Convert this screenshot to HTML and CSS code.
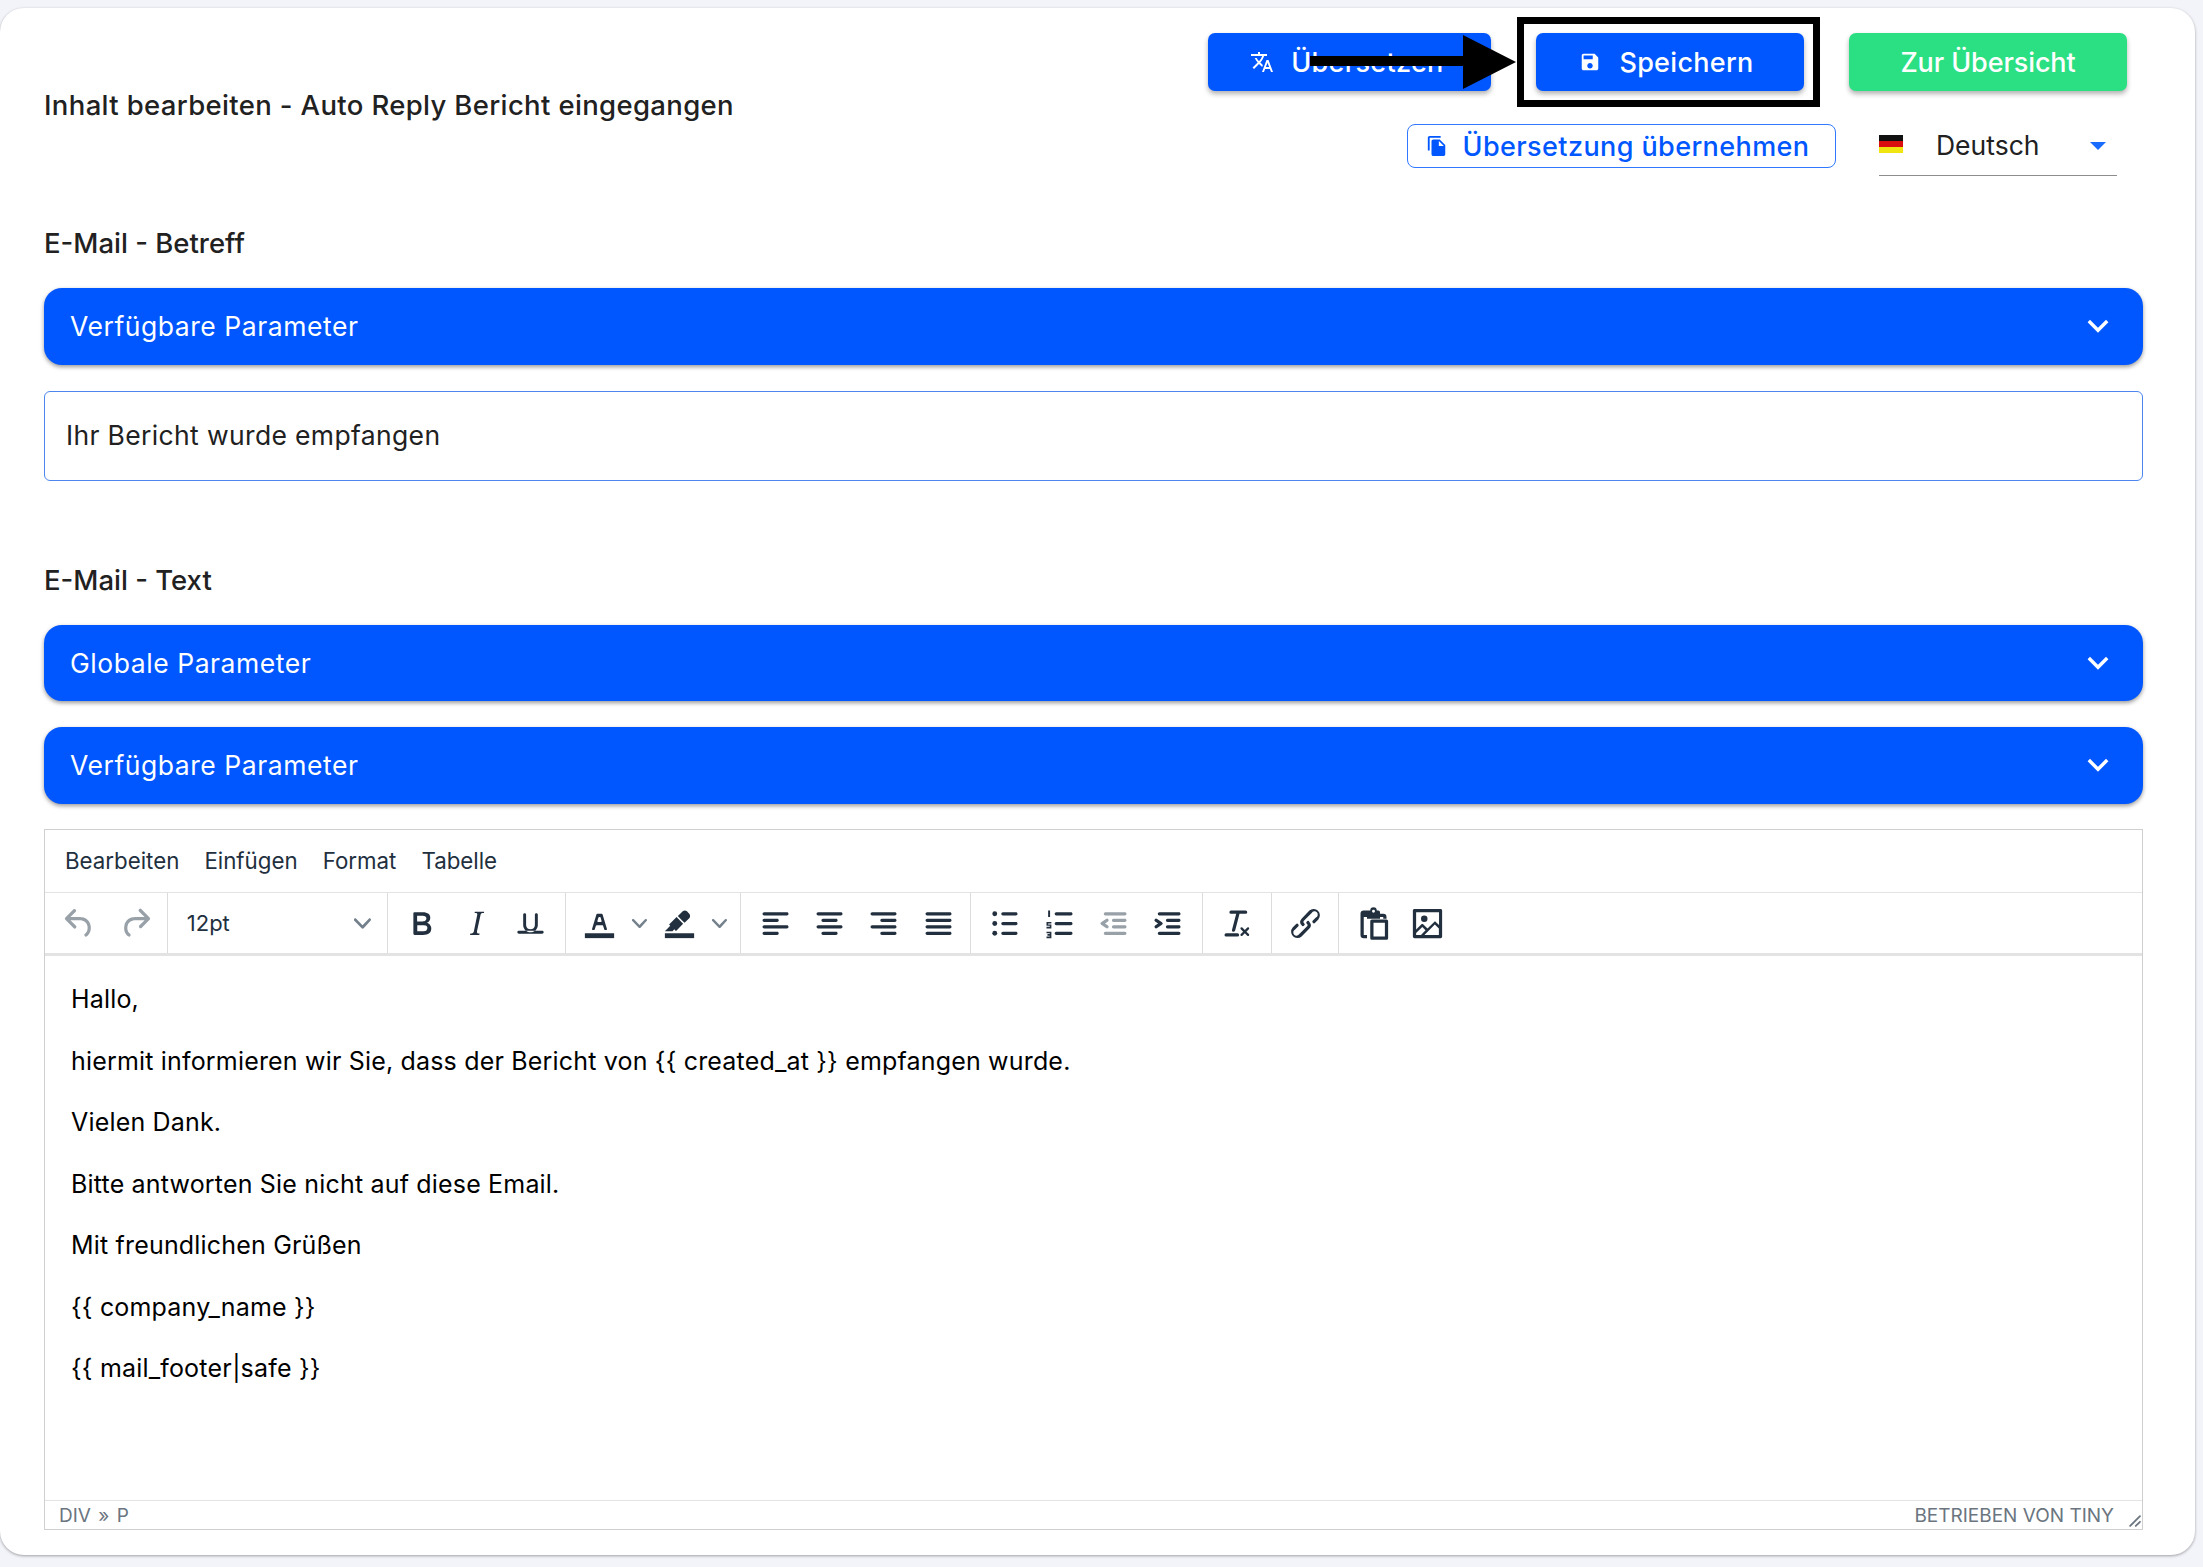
FILE: index.html
```html
<!DOCTYPE html>
<html lang="de">
<head>
    <meta charset="utf-8">
    <title>Inhalt bearbeiten</title>
    <link rel="stylesheet" href="styles.css">
</head>
<body>
    <div class="card">
        <div class="header">
            <h1 class="title">Inhalt bearbeiten - Auto Reply Bericht eingegangen</h1>
            <div class="actions">
                <div class="actions-row">
                    <button class="btn btn--blue btn--translate">
                        <svg class="btn-icon" viewBox="0 0 24 24"><path d="M12.87 15.07l-2.54-2.51.03-.03c1.74-1.94 2.98-4.17 3.71-6.53H17V4h-7V2H8v2H1v1.99h11.17C11.5 7.92 10.44 9.75 9 11.35 8.07 10.32 7.3 9.19 6.69 8h-2c.73 1.63 1.73 3.17 2.98 4.56l-5.09 5.02L4 19l5-5 3.11 3.11.76-2.04zM18.5 10h-2L12 22h2l1.12-3h4.75L21 22h2l-4.5-12zm-2.62 7l1.62-4.33L19.12 17h-3.24z"/></svg>
                        Übersetzen
                    </button>
                    <button class="btn btn--blue btn--save">
                        <svg class="btn-icon" viewBox="0 0 24 24"><path d="M17 3H5c-1.11 0-2 .9-2 2v14c0 1.1.89 2 2 2h14c1.1 0 2-.9 2-2V7l-4-4zm-5 16c-1.66 0-3-1.34-3-3s1.34-3 3-3 3 1.34 3 3-1.34 3-3 3zm3-10H5V5h10v4z"/></svg>
                        Speichern
                    </button>
                    <button class="btn btn--green">Zur Übersicht</button>
                </div>
                <div class="actions-row actions-row--second">
                    <button class="btn-outline">
                        <svg class="btn-icon" viewBox="0 0 24 24"><path d="M16 1H4c-1.1 0-2 .9-2 2v14h2V3h12V1zm-1 4l6 6v10c0 1.1-.9 2-2 2H7.99C6.89 23 6 22.1 6 21l.01-14c0-1.1.89-2 1.99-2h7zm-1 7h5.5L14 6.5V12z"/></svg>
                        Übersetzung übernehmen
                    </button>
                    <div class="lang-select">
                        <span class="flag"></span>
                        <span class="lang-name">Deutsch</span>
                        <span class="caret"></span>
                    </div>
                </div>
            </div>
        </div>

        <h2 class="section-title section-title--first">E-Mail - Betreff</h2>
        <div class="bar">
            <span>Verfügbare Parameter</span>
            <svg class="bar-chevron" viewBox="0 0 24 24"><path d="M5.5 8.5L12 15l6.5-6.5" /></svg>
        </div>
        <div class="subject-input">Ihr Bericht wurde empfangen</div>

        <h2 class="section-title">E-Mail - Text</h2>
        <div class="bar">
            <span>Globale Parameter</span>
            <svg class="bar-chevron" viewBox="0 0 24 24"><path d="M5.5 8.5L12 15l6.5-6.5" /></svg>
        </div>
        <div class="bar bar--tight">
            <span>Verfügbare Parameter</span>
            <svg class="bar-chevron" viewBox="0 0 24 24"><path d="M5.5 8.5L12 15l6.5-6.5" /></svg>
        </div>

        <div class="editor">
            <div class="menubar">
                <span class="menu-item">Bearbeiten</span>
                <span class="menu-item">Einfügen</span>
                <span class="menu-item">Format</span>
                <span class="menu-item">Tabelle</span>
            </div>
            <div class="toolbar">
                <div class="tool-group tool-group--history">
                    <span class="tool tool--off"><svg viewBox="0 0 24 24"><path d="M6.4 8H12c3.7 0 6.2 2 6.8 5.1.6 2.7-.4 5.6-2.3 6.8a1 1 0 01-1-1.8c1.1-.6 1.8-2.7 1.4-4.6-.5-2.1-2.1-3.5-4.9-3.5H6.4l3.3 3.3a1 1 0 11-1.4 1.4l-5-5a1 1 0 010-1.4l5-5a1 1 0 011.4 1.4L6.4 8z"/></svg></span>
                    <span class="tool tool--off"><svg viewBox="0 0 24 24"><path d="M17.6 10H12c-2.8 0-4.4 1.4-4.9 3.5-.4 2 .3 4 1.4 4.6a1 1 0 11-1 1.8c-2-1.2-2.9-4.1-2.3-6.8.6-3 3-5.1 6.8-5.1h5.6l-3.3-3.3a1 1 0 111.4-1.4l5 5a1 1 0 010 1.4l-5 5a1 1 0 01-1.4-1.4l3.3-3.3z"/></svg></span>
                </div>
                <div class="tool-group">
                    <div class="size-select">
                        <span>12pt</span>
                        <svg class="chevron" viewBox="0 0 10 10"><path d="M8.7 2.2c.3-.3.8-.3 1 0 .4.4.4.9 0 1.2L5.7 7.8c-.3.3-.9.3-1.2 0L.2 3.4a.8.8 0 010-1.2c.3-.3.8-.3 1.1 0L5 6l3.7-3.8z"/></svg>
                    </div>
                </div>
                <div class="tool-group">
                    <span class="tool"><svg viewBox="0 0 24 24"><path fill-rule="evenodd" d="M7.8 19c-.3 0-.5 0-.6-.2l-.2-.5V5.7c0-.2 0-.4.2-.5l.6-.2h5c1.5 0 2.7.3 3.5 1 .7.6 1.1 1.4 1.1 2.5a3 3 0 01-.6 1.9c-.4.6-1 1-1.6 1.2.4.1.9.3 1.3.6s.8.7 1 1.2c.4.4.5 1 .5 1.6 0 1.3-.4 2.3-1.3 3-.8.7-2.1 1-3.8 1H7.8zm5-8.3c.6 0 1.2-.1 1.6-.5.4-.3.6-.7.6-1.3 0-1.1-.8-1.7-2.3-1.7H9.3v3.5h3.4zm.5 6c.7 0 1.3-.1 1.7-.4.4-.4.6-.9.6-1.5s-.2-1-.7-1.4c-.4-.3-1-.4-2-.4H9.4v3.8h4z"/></svg></span>
                    <span class="tool"><svg viewBox="0 0 24 24"><path fill-rule="evenodd" d="M16.7 4.7l-.1.9h-.3c-.6 0-1 0-1.4.3-.3.3-.4.6-.5 1.1l-2.1 9.8v.6c0 .5.4.8 1.4.8h.2l-.2.8H8l.2-.8h.2c1.1 0 1.8-.5 2-1.5l2-9.8.1-.5c0-.6-.4-.8-1.4-.8h-.3l.2-.9h5.8z"/></svg></span>
                    <span class="tool"><svg viewBox="0 0 24 24"><path fill-rule="evenodd" d="M16 5c.6 0 1 .4 1 1v7c0 2.8-2.2 5-5 5s-5-2.2-5-5V6c0-.6.4-1 1-1s1 .4 1 1v7c0 1.7 1.3 3 3 3s3-1.3 3-3V6c0-.6.4-1 1-1zM4 17h16c.6 0 1 .4 1 1s-.4 1-1 1H4a1 1 0 110-2z" transform="translate(1.2 1.2) scale(.9)"/></svg></span>
                </div>
                <div class="tool-group tool-group--color">
                    <span class="tool tool--color"><svg viewBox="0 0 24 24"><path d="M3 18h18v3H3z"/><path d="M8.7 16h-.8a.5.5 0 01-.5-.6l2.7-9c.1-.3.3-.4.5-.4h2.8c.2 0 .4.1.5.4l2.7 9a.5.5 0 01-.5.6h-.8a.5.5 0 01-.4-.4l-.7-2.2c0-.3-.3-.4-.5-.4h-3.4c-.2 0-.4.1-.5.4l-.7 2.2c0 .3-.2.4-.4.4zm2.6-7.6l-.6 2a.5.5 0 00.5.6h1.6a.5.5 0 00.5-.6l-.6-2c0-.3-.3-.4-.5-.4h-.4c-.2 0-.4.1-.5.4z"/></svg></span>
                    <span class="tool-arrow"><svg class="chevron" viewBox="0 0 10 10"><path d="M8.7 2.2c.3-.3.8-.3 1 0 .4.4.4.9 0 1.2L5.7 7.8c-.3.3-.9.3-1.2 0L.2 3.4a.8.8 0 010-1.2c.3-.3.8-.3 1.1 0L5 6l3.7-3.8z"/></svg></span>
                    <span class="tool tool--color"><svg viewBox="0 0 24 24"><path d="M3 18h18v3H3z"/><path d="M7.7 16.7H3l3.3-3.3-.7-.8L10.2 8l4 4.1-4 4.2c-.2.2-.6.2-.8 0l-.6-.7-1.1 1.1zm5-7.5L11 7.4l3-2.9a2 2 0 012.6 0L18 6c.7.7.7 2 0 2.7l-2.9 2.9-1.8-1.8-.5-.6"/></svg></span>
                    <span class="tool-arrow"><svg class="chevron" viewBox="0 0 10 10"><path d="M8.7 2.2c.3-.3.8-.3 1 0 .4.4.4.9 0 1.2L5.7 7.8c-.3.3-.9.3-1.2 0L.2 3.4a.8.8 0 010-1.2c.3-.3.8-.3 1.1 0L5 6l3.7-3.8z"/></svg></span>
                </div>
                <div class="tool-group tool-group--align">
                    <span class="tool"><svg viewBox="0 0 24 24"><path d="M5 5h14c.6 0 1 .4 1 1s-.4 1-1 1H5a1 1 0 110-2zm0 4h8c.6 0 1 .4 1 1s-.4 1-1 1H5a1 1 0 110-2zm0 8h8c.6 0 1 .4 1 1s-.4 1-1 1H5a1 1 0 010-2zm0-4h14c.6 0 1 .4 1 1s-.4 1-1 1H5a1 1 0 010-2z"/></svg></span>
                    <span class="tool"><svg viewBox="0 0 24 24"><path d="M5 5h14c.6 0 1 .4 1 1s-.4 1-1 1H5a1 1 0 110-2zm3 4h8c.6 0 1 .4 1 1s-.4 1-1 1H8a1 1 0 110-2zm0 8h8c.6 0 1 .4 1 1s-.4 1-1 1H8a1 1 0 010-2zm-3-4h14c.6 0 1 .4 1 1s-.4 1-1 1H5a1 1 0 010-2z"/></svg></span>
                    <span class="tool"><svg viewBox="0 0 24 24"><path d="M5 5h14c.6 0 1 .4 1 1s-.4 1-1 1H5a1 1 0 110-2zm6 4h8c.6 0 1 .4 1 1s-.4 1-1 1h-8a1 1 0 010-2zm0 8h8c.6 0 1 .4 1 1s-.4 1-1 1h-8a1 1 0 010-2zm-6-4h14c.6 0 1 .4 1 1s-.4 1-1 1H5a1 1 0 010-2z"/></svg></span>
                    <span class="tool"><svg viewBox="0 0 24 24"><path d="M5 5h14c.6 0 1 .4 1 1s-.4 1-1 1H5a1 1 0 110-2zm0 4h14c.6 0 1 .4 1 1s-.4 1-1 1H5a1 1 0 110-2zm0 4h14c.6 0 1 .4 1 1s-.4 1-1 1H5a1 1 0 010-2zm0 4h14c.6 0 1 .4 1 1s-.4 1-1 1H5a1 1 0 010-2z"/></svg></span>
                </div>
                <div class="tool-group">
                    <span class="tool"><svg viewBox="0 0 24 24"><path d="M11 5h8c.6 0 1 .4 1 1s-.4 1-1 1h-8a1 1 0 010-2zm0 6h8c.6 0 1 .4 1 1s-.4 1-1 1h-8a1 1 0 010-2zm0 6h8c.6 0 1 .4 1 1s-.4 1-1 1h-8a1 1 0 010-2z"/><circle cx="6" cy="6" r="1.5"/><circle cx="6" cy="12" r="1.5"/><circle cx="6" cy="18" r="1.5"/></svg></span>
                    <span class="tool"><svg viewBox="0 0 24 24"><path d="M10 5h9c.6 0 1 .4 1 1s-.4 1-1 1h-9a1 1 0 010-2zm0 6h9c.6 0 1 .4 1 1s-.4 1-1 1h-9a1 1 0 010-2zm0 6h9c.6 0 1 .4 1 1s-.4 1-1 1h-9a1 1 0 010-2z"/><path d="M5 4h1.2v4H5zM4 11h3v1H5v.6h2V15H4v-1h2v-.6H4zM4 17h3v4H4v-1h2v-.5H4.6v-1H6V18H4z"/></svg></span>
                    <span class="tool tool--off"><svg viewBox="0 0 24 24"><path d="M7 5h12c.6 0 1 .4 1 1s-.4 1-1 1H7a1 1 0 110-2zm5 4h7c.6 0 1 .4 1 1s-.4 1-1 1h-7a1 1 0 010-2zm0 4h7c.6 0 1 .4 1 1s-.4 1-1 1h-7a1 1 0 010-2zm-5 4h12a1 1 0 010 2H7a1 1 0 010-2zm1.6-3.8a1 1 0 01-1.2 1.6l-3-2a1 1 0 010-1.6l3-2a1 1 0 011.2 1.6L6.8 12l1.8 1.2z"/></svg></span>
                    <span class="tool"><svg viewBox="0 0 24 24"><path d="M7 5h12c.6 0 1 .4 1 1s-.4 1-1 1H7a1 1 0 110-2zm5 4h7c.6 0 1 .4 1 1s-.4 1-1 1h-7a1 1 0 010-2zm0 4h7c.6 0 1 .4 1 1s-.4 1-1 1h-7a1 1 0 010-2zm-5 4h12a1 1 0 010 2H7a1 1 0 010-2zm-2.6-3.8L6.2 12l-1.8-1.2a1 1 0 011.2-1.6l3 2a1 1 0 010 1.6l-3 2a1 1 0 11-1.2-1.6z"/></svg></span>
                </div>
                <div class="tool-group">
                    <span class="tool"><svg viewBox="0 0 24 24"><path fill-rule="evenodd" d="M13.2 6a1 1 0 010 .2l-2.6 10a1 1 0 01-1 .8h-.2a.8.8 0 01-.8-1l2.6-10H8a1 1 0 110-2h9a1 1 0 010 2h-3.8zM5 18h7a1 1 0 010 2H5a1 1 0 010-2zm13 1.5L16.5 18 15 19.5a.7.7 0 01-1-1l1.5-1.5-1.5-1.5a.7.7 0 011-1l1.5 1.5 1.5-1.5a.7.7 0 011 1L17.5 17l1.5 1.5a.7.7 0 01-1 1z"/></svg></span>
                </div>
                <div class="tool-group tool-group--link">
                    <span class="tool"><svg viewBox="0 0 24 24"><path d="M6.2 12.3a1 1 0 0 1 1.4 1.4l-2 2a2 2 0 1 0 2.6 2.8l4.8-4.8a1 1 0 0 0 0-1.4 1 1 0 1 1 1.4-1.3 2.9 2.9 0 0 1 0 4L9.6 20a3.9 3.9 0 0 1-5.5-5.5l2-2zm11.6-.6a1 1 0 0 1-1.4-1.4l2-2a2 2 0 1 0-2.6-2.8L11 10.3a1 1 0 0 0 0 1.4 1 1 0 1 1-1.4 1.3 2.9 2.9 0 0 1 0-4L14.4 4a3.9 3.9 0 0 1 5.5 5.5l-2 2z"/></svg></span>
                </div>
                <div class="tool-group tool-group--last">
                    <span class="tool"><svg viewBox="0 0 24 24"><path d="M9 4h1a2 2 0 014 0h1a1 1 0 011 1v1h2a2 2 0 012 2v1h-2V8h-2v1H8V8H6v11h2v2H6a2 2 0 01-2-2V8 6a2 2 0 012-2h3zm3-.4a.9.9 0 100 1.8.9.9 0 000-1.8z"/><path fill-rule="evenodd" d="M10 10.5a1 1 0 011-1h9a1 1 0 011 1V21a1 1 0 01-1 1h-9a1 1 0 01-1-1V10.500zm2 1V20h7v-8.500h-7z"/></svg></span>
                    <span class="tool"><svg viewBox="0 0 24 24"><path d="M5 15.7l3.3-3.2c.3-.3.7-.3 1 0L12 15l4.1-4c.3-.4.8-.4 1 0l2 1.9V5H5v10.7zM5 18V19h3l2.8-2.9-2-2L5 17.9zm14-3l-2.5-2.4-6.4 6.5H19v-4zM4 3h16c.6 0 1 .4 1 1v16c0 .6-.4 1-1 1H4a1 1 0 01-1-1V4c0-.6.4-1 1-1zm6 8a2 2 0 100-4 2 2 0 000 4z"/></svg></span>
                </div>
            </div>
            <div class="editor-body">
                <p>Hallo,</p>
                <p>hiermit informieren wir Sie, dass der Bericht von {{ created_at }} empfangen wurde.</p>
                <p>Vielen Dank.</p>
                <p>Bitte antworten Sie nicht auf diese Email.</p>
                <p>Mit freundlichen Grüßen</p>
                <p>{{ company_name }}</p>
                <p>{{ mail_footer|safe }}</p>
            </div>
            <div class="statusbar">
                <span class="path">DIV » P</span>
                <span class="branding">BETRIEBEN VON TINY</span>
                <svg class="resize-handle" viewBox="0 0 10 10"><path d="M8.1 1.1A.5.5 0 119 2L2 9a.5.5 0 11-.9-.9zm0 4A.5.5 0 119 6L6 9a.5.5 0 11-.9-.9z"/></svg>
            </div>
        </div>

        <!-- annotation drawn over the screenshot -->
        <div class="mark-box"></div>
        <svg class="mark-arrow" viewBox="0 0 206 54"><path d="M0 21h153V0l53 27-53 27V31H0z"/></svg>
    </div>
</body>
</html>
```

FILE: styles.css
```css
:root {
    --ff: 'Inter', 'Liberation Sans', sans-serif;
    --blue: #0057ff;
    --green: #2bdf83;
    --tox-dark: #222f3e;
    --tox-line: #e3e3e3;
    --tox-border: #cfcfcf;
}

* {
    box-sizing: border-box;
}

html,
body {
    height: 100%;
}

body {
    font-family: var(--ff);
    color: #212121;
    background-color: #f3f4fa;

    margin: 0;
    padding-top: 8px;
    overflow: hidden;
}

.card {
    position: relative;
    background-color: #fff;
    border-radius: 24px;
    box-shadow: 0 1px 3px rgba(0, 0, 0, .35);

    width: 2195px;
    height: 1547px;
    padding: 25px 52px 0 44px;
}

/* header */
.header {
    display: flex;
    justify-content: space-between;
    height: 150px;
}

.title {
    font-size: 27.5px;
    font-weight: 500;
    letter-spacing: .35px;
    line-height: 40px;

    margin: 52px 0 0;
}

.actions {
    display: flex;
    flex-direction: column;
    align-items: flex-end;
    padding-right: 16px;
}

.actions-row {
    display: flex;
    gap: 45px;
}

.actions-row--second {
    align-items: flex-start;
    gap: 43px;
    margin-top: 33px;
    margin-right: 10px;
}

.btn {
    font-family: var(--ff);
    font-size: 27px;
    font-weight: 500;
    letter-spacing: .3px;
    color: #fff;
    border: 0;
    border-radius: 7px;
    box-shadow: 0 3px 5px rgba(0, 0, 0, .3);

    height: 58px;
    padding: 0;

    display: flex;
    justify-content: center;
    align-items: center;
}

.btn--blue {
    background-color: var(--blue);
}

.btn--green {
    background-color: var(--green);
    letter-spacing: -.1px;
    width: 278px;
}

.btn--translate {
    width: 283px;
    gap: 17px;
    padding-right: 5px;
}

.btn--save {
    width: 268px;
    gap: 18px;
    padding-right: 7px;
}

.btn-icon {
    fill: currentColor;
    width: 22px;
    height: 22px;
    flex: none;
}

.btn--translate .btn-icon {
    width: 24px;
    height: 24px;
}

.btn-outline {
    font-family: var(--ff);
    font-size: 27px;
    font-weight: 500;
    letter-spacing: .4px;
    color: var(--blue);
    background-color: #fff;
    border: 1.5px solid #2f78ff;
    border-radius: 8px;

    width: 429px;
    height: 44px;
    padding: 0 8px 0 0;

    display: flex;
    justify-content: center;
    align-items: center;
    gap: 15px;
}

.lang-select {
    font-size: 26.5px;
    border-bottom: 1.5px solid #8d8d8d;

    width: 238px;
    height: 52px;

    display: flex;
    align-items: flex-start;
    line-height: 42px;
}

.flag {
    background: linear-gradient(#111 0 33%, #d90f0f 33% 66%, #f0e511 66%);

    width: 24px;
    height: 18px;
    margin-top: 11px;
    margin-right: 33px;
}

.lang-name {
    flex: 1;
}

.caret {
    border-left: 8px solid transparent;
    border-right: 8px solid transparent;
    border-top: 8px solid #1a6cff;

    margin-top: 18px;
    margin-right: 11px;
}

/* sections */
.section-title {
    font-size: 27.5px;
    font-weight: 500;
    line-height: 40px;

    margin: 79px 0 25px;
}

.section-title--first {
    margin-top: 40px;
}

.bar {
    font-size: 26.5px;
    letter-spacing: .55px;
    color: #fff;
    background-color: var(--blue);
    border-radius: 18px;
    box-shadow: 0 2px 4px rgba(0, 0, 0, .4);

    height: 76.5px;
    padding: 0 26px;
    margin-bottom: 26px;

    display: flex;
    justify-content: space-between;
    align-items: center;
}

.bar--tight {
    margin-bottom: 25px;
}

.bar-chevron {
    fill: none;
    stroke: #fff;
    stroke-width: 2.4;

    width: 34px;
    height: 34px;
    margin-right: 2px;
}

.subject-input {
    font-size: 26.5px;
    letter-spacing: .35px;
    line-height: 86px;
    border: 1.5px solid #4c86ee;
    border-radius: 6px;

    height: 90px;
    padding-left: 21px;
}

/* editor */
.editor {
    border: 1.5px solid var(--tox-border);

    height: 701.5px;

    display: flex;
    flex-direction: column;
}

.menubar {
    font-size: 22.3px;
    color: var(--tox-dark);
    height: 62.5px;
    padding-left: 20px;

    display: flex;
    gap: 25px;
    align-items: center;
}

.toolbar {
    font-size: 22px;
    border-top: 1.5px solid var(--tox-line);
    border-bottom: 3px solid var(--tox-line);

    height: 64px;

    display: flex;
}

.tool-group {
    border-right: 1px solid #dcdcdc;
    padding: 0 7px;

    display: flex;
    align-items: center;
}

.tool-group--history {
    padding: 0 4px 0 7px;
}

.tool-group--history .tool {
    width: 55.4px;
}

.tool-group--color {
    padding: 0 4px 0 10px;
}

.tool-group--align {
    padding-right: 4px;
}

.tool-group--link {
    padding: 0 5px 0 6px;
}

.tool-group--last {
    border-right: 0;
}

.tool {
    width: 54.4px;
    display: flex;
    justify-content: center;
}

.tool svg {
    fill: var(--tox-dark);
    width: 39px;
    height: 39px;
    flex: none;
}

.tool--off svg {
    fill: #98a0a8;
}

.tool--color {
    width: 47px;
}

.tool-arrow {
    width: 33px;
    display: flex;
    justify-content: center;
}

.chevron {
    fill: #74808c;
    width: 15px;
    height: 15px;
}

.size-select {
    color: var(--tox-dark);
    width: 205px;
    padding: 0 9px 0 12px;

    display: flex;
    justify-content: space-between;
    align-items: center;
}

.size-select .chevron {
    width: 17px;
    height: 17px;
}

.editor-body {
    font-size: 25px;
    letter-spacing: .18px;
    color: #000;
    line-height: 31px;

    flex: 1;
    padding: 13px 26px 0;
}

.editor-body p {
    margin: 0;
    padding: 15.25px 0;
}

.statusbar {
    font-size: 19px;
    color: #6b7580;
    border-top: 1.5px solid var(--tox-line);

    height: 29px;
    padding: 0 28px 0 14px;

    display: flex;
    justify-content: space-between;
    align-items: center;
    position: relative;
}

.path {
    word-spacing: 2px;
}

.resize-handle {
    position: absolute;
    right: 0;
    bottom: 1px;
    fill: #6b7580;
    width: 14px;
    height: 14px;
}

/* annotation */
.mark-box {
    position: absolute;
    left: 1517px;
    top: 9px;
    width: 303px;
    height: 90px;
    border: 7px solid #000;
}

.mark-arrow {
    position: absolute;
    left: 1310px;
    top: 27px;
    width: 206px;
    height: 54px;
}
```
